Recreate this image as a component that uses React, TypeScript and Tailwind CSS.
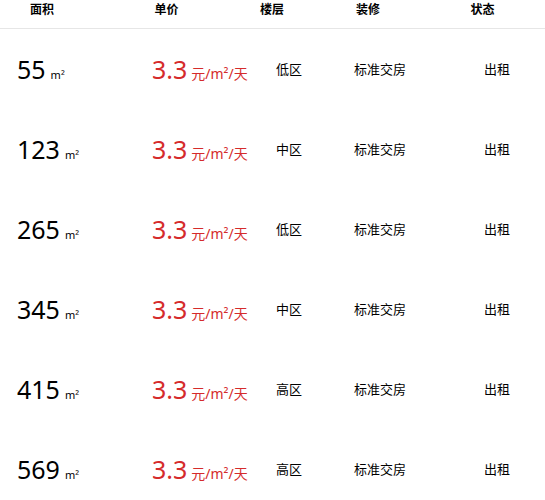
import * as React from 'react';

const rows = [
  { area: '55', floor: '低区' },
  { area: '123', floor: '中区' },
  { area: '265', floor: '低区' },
  { area: '345', floor: '中区' },
  { area: '415', floor: '高区' },
  { area: '569', floor: '高区' },
];

const font = { fontFamily: '"Noto Sans", "Noto Sans CJK SC", sans-serif' };

export default function App() {
  return (
    <div
      className="w-[545px] h-[500px] bg-white text-black overflow-hidden"
      style={font}
    >
      {/* Header */}
      <div className="flex h-[29px] border-b border-[#e6e6e6] text-[12px] font-bold leading-none pt-[4px]">
        <div className="w-[84px] text-center">面积</div>
        <div className="w-[165px] text-center">单价</div>
        <div className="w-[46px] text-center">楼层</div>
        <div className="w-[146px] text-center">装修</div>
        <div className="w-[83px] text-center">状态</div>
      </div>

      {/* Rows */}
      {rows.map((r) => (
        <div key={r.area} className="flex items-center h-[80px]">
          <div className="w-[152px] pl-[17px] flex items-baseline">
            <span className="text-[25px] leading-none">{r.area}</span>
            <span className="text-[11px] ml-[5px] leading-none">m²</span>
          </div>
          <div className="w-[124px] flex items-baseline text-[#d52b2b]">
            <span className="text-[25px] leading-none">3.3</span>
            <span className="text-[14px] ml-[4px] leading-none">元/m²/天</span>
          </div>
          <div className="w-[78px] text-[13px] leading-none">{r.floor}</div>
          <div className="w-[130px] text-[13px] leading-none">标准交房</div>
          <div className="text-[13px] leading-none">出租</div>
        </div>
      ))}
    </div>
  );
}
